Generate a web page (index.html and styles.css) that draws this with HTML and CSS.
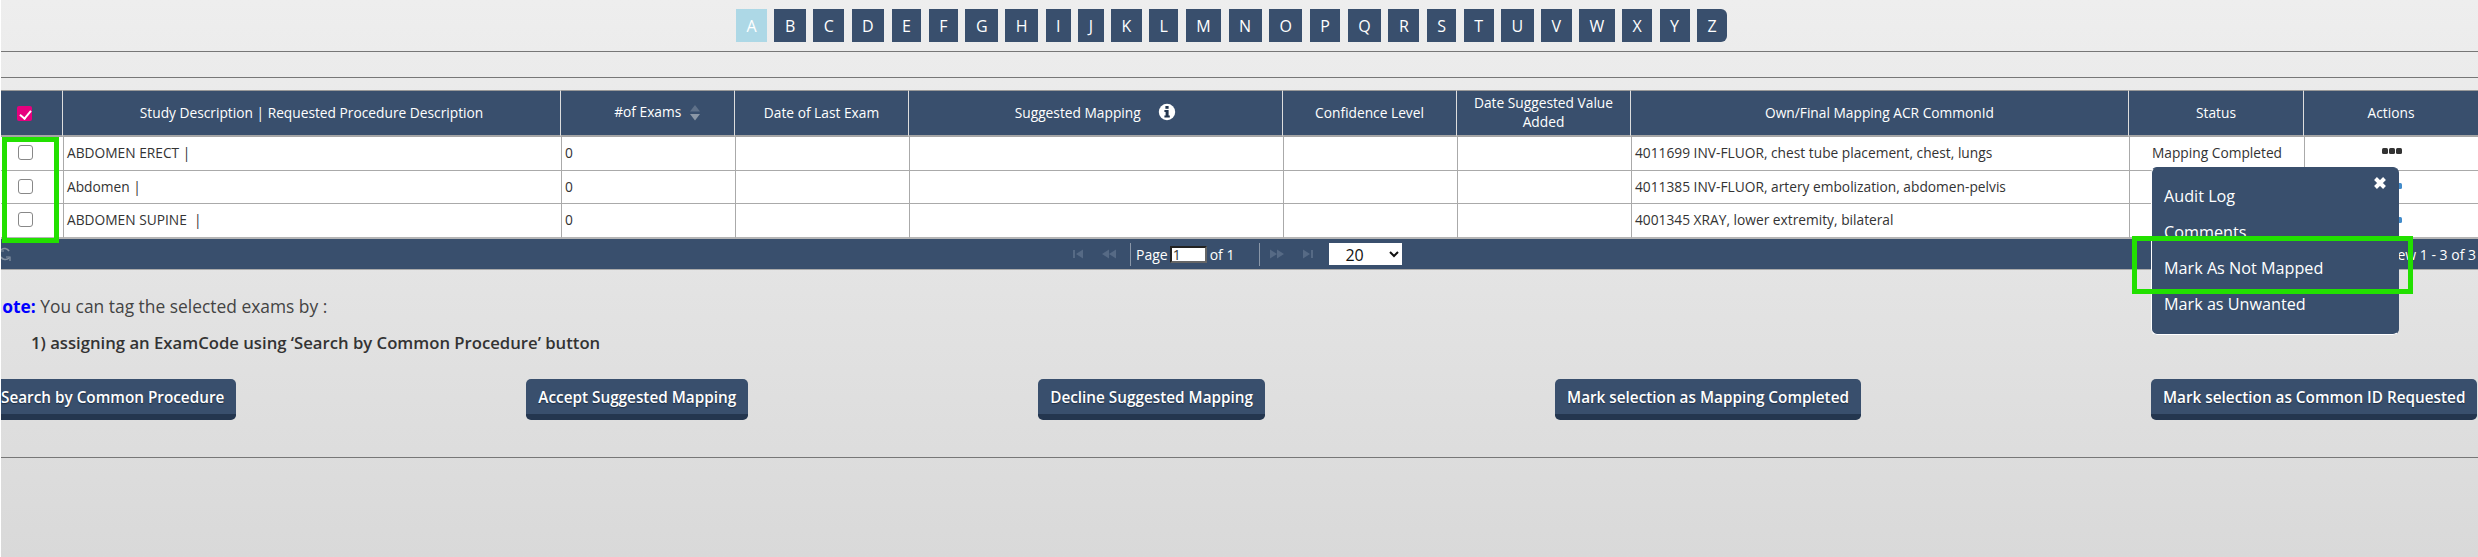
FILE: index.html
```html
<!DOCTYPE html>
<html lang="en">
<head>
<meta charset="utf-8">
<title>Exam Mapping</title>
<link rel="stylesheet" href="styles.css">
</head>
<body>
<div class="page">
  <nav class="alpha">
    <a class="letter active">A</a><a class="letter">B</a><a class="letter">C</a><a class="letter">D</a><a class="letter">E</a><a class="letter">F</a><a class="letter">G</a><a class="letter">H</a><a class="letter">I</a><a class="letter">J</a><a class="letter">K</a><a class="letter">L</a><a class="letter">M</a><a class="letter">N</a><a class="letter">O</a><a class="letter">P</a><a class="letter">Q</a><a class="letter">R</a><a class="letter">S</a><a class="letter">T</a><a class="letter">U</a><a class="letter">V</a><a class="letter">W</a><a class="letter">X</a><a class="letter">Y</a><a class="letter last">Z</a>
  </nav>
  <hr class="rule rule-a">
  <hr class="rule rule-b">

  <table class="grid">
    <colgroup>
      <col class="c-check"><col class="c-wide"><col class="c-std"><col class="c-std"><col class="c-sugg"><col class="c-std"><col class="c-std"><col class="c-wide"><col class="c-status"><col class="c-std">
    </colgroup>
    <thead>
      <tr>
        <th><input type="checkbox" class="check-all" checked></th>
        <th>Study Description | Requested Procedure Description</th>
        <th>#of Exams <svg class="sort" width="10" height="18" viewBox="0 0 10 18"><polygon points="5,1 10,7.5 0,7.5" fill="#5f7189"/><polygon points="0,10 10,10 5,16.5" fill="#8b97a6"/></svg></th>
        <th>Date of Last Exam</th>
        <th>Suggested Mapping <svg class="info" width="18" height="18" viewBox="0 0 18 18"><circle cx="9" cy="9" r="8.2" fill="#fff"/><rect x="7.4" y="3" width="3.2" height="2.8" fill="#24364f"/><path d="M6.4 7h4.2v5.4h1.2v2H6.4v-2h1.2V9H6.4z" fill="#24364f"/></svg></th>
        <th>Confidence Level</th>
        <th>Date Suggested Value Added</th>
        <th>Own/Final Mapping ACR CommonId</th>
        <th>Status</th>
        <th>Actions</th>
      </tr>
    </thead>
    <tbody>
      <tr>
        <td class="center"><input type="checkbox" class="check"></td>
        <td>ABDOMEN ERECT |</td><td>0</td><td></td><td></td><td></td><td></td>
        <td>4011699 INV-FLUOR, chest tube placement, chest, lungs</td>
        <td class="center">Mapping Completed</td>
        <td class="center"><svg class="dots" width="20" height="6" viewBox="0 0 20 6"><rect width="6" height="6" rx="1.5"/><rect x="7" width="6" height="6" rx="1.5"/><rect x="14" width="6" height="6" rx="1.5"/></svg></td>
      </tr>
      <tr>
        <td class="center"><input type="checkbox" class="check"></td>
        <td>Abdomen |</td><td>0</td><td></td><td></td><td></td><td></td>
        <td>4011385 INV-FLUOR, artery embolization, abdomen-pelvis</td>
        <td></td>
        <td class="center"><svg class="dots link" width="20" height="6" viewBox="0 0 20 6"><rect width="6" height="6" rx="1.5"/><rect x="7" width="6" height="6" rx="1.5"/><rect x="14" width="6" height="6" rx="1.5"/></svg></td>
      </tr>
      <tr>
        <td class="center"><input type="checkbox" class="check"></td>
        <td>ABDOMEN SUPINE &nbsp;|</td><td>0</td><td></td><td></td><td></td><td></td>
        <td>4001345 XRAY, lower extremity, bilateral</td>
        <td></td>
        <td class="center"><svg class="dots link" width="20" height="6" viewBox="0 0 20 6"><rect width="6" height="6" rx="1.5"/><rect x="7" width="6" height="6" rx="1.5"/><rect x="14" width="6" height="6" rx="1.5"/></svg></td>
      </tr>
    </tbody>
  </table>

  <div class="pager">
    <svg class="refresh" width="12" height="16" viewBox="0 0 12 16"><path d="M10 5A5 5 0 0 0 2 4M2 11a5 5 0 0 0 8 1" fill="none" stroke="#8793a3" stroke-width="1.6"/><path d="M1 1v4h4M11 15v-4H7" fill="none" stroke="#8793a3" stroke-width="1.2"/></svg>
    <div class="pager-center">
      <svg class="pg-icon" width="12" height="12" viewBox="0 0 12 12"><path d="M1 2h2v8H1zM11 1.500v9L4 6z"/></svg>
      <svg class="pg-icon pg-prev" width="14" height="12" viewBox="0 0 14 12"><path d="M7 1.500v9L0 6zM14 1.500v9L7 6z"/></svg>
      <span class="pg-sep"></span>
      <span class="pg-label">Page</span>
      <input class="pg-input" type="text" value="1">
      <span class="pg-label">of 1</span>
      <span class="pg-sep pg-sep-r"></span>
      <svg class="pg-icon" width="14" height="12" viewBox="0 0 14 12"><path d="M0 1.500v9L7 6zM7 1.500v9L14 6z"/></svg>
      <svg class="pg-icon pg-last" width="12" height="12" viewBox="0 0 12 12"><path d="M1 1.500v9L8 6zM9 2h2v8H9z"/></svg>
      <select class="pg-size"><option>20</option></select>
    </div>
    <span class="pager-count">View 1 - 3 of 3</span>
  </div>

  <p class="note"><b class="note-key">Note:</b> You can tag the selected exams by :</p>
  <p class="note-step">1) assigning an ExamCode using ‘Search by Common Procedure’ button</p>

  <div class="actions">
    <button class="btn">Search by Common Procedure</button>
    <button class="btn">Accept Suggested Mapping</button>
    <button class="btn">Decline Suggested Mapping</button>
    <button class="btn">Mark selection as Mapping Completed</button>
    <button class="btn">Mark selection as Common ID Requested</button>
  </div>
  <hr class="rule rule-c">

  <div class="menu">
    <svg class="menu-close" width="14" height="14" viewBox="0 0 14 14"><path d="M2.500 2.500l9 9M11.500 2.500l-9 9" stroke="#fff" stroke-width="4" fill="none"/></svg>
    <a class="menu-item">Audit Log</a>
    <a class="menu-item">Comments</a>
    <a class="menu-item">Mark As Not Mapped</a>
    <a class="menu-item">Mark as Unwanted</a>
  </div>
  <div class="mark mark-checks"></div>
  <div class="mark mark-item"></div>
</div>
</body>
</html>
```

FILE: styles.css
```css
* { box-sizing: border-box; }
html, body { margin: 0; padding: 0; background: #fff; }
body { padding-left: 1px; font-family: "Open Sans", "Liberation Sans", sans-serif; font-size: 14px; color: #333; }

.page {
  position: relative;
  width: 2477px;
  height: 557px;
  overflow: hidden;
  padding-top: 9px;
  background: linear-gradient(#eeeeee, #d9d9d9);
}

.alpha { display: flex; gap: 7.350px; padding-left: 735px; height: 33px; }
.letter {
  display: flex;
  align-items: center;
  padding: 0 10.500px;
  background: #394f6d;
  color: #fff;
  font-size: 16px;
}
.letter.active { background: #add8e6; }
.letter.last { border-radius: 0 6px 6px 0; }

.rule { margin: 0; border: 0; height: 1px; background: #777; }
.rule-a { margin-top: 9px; }
.rule-b { margin-top: 25px; }
.rule-c { margin-top: 37px; }

.grid {
  table-layout: fixed;
  border-collapse: separate;
  border-spacing: 0;
  width: 2477px;
  margin-top: 12px;
}
.c-check { width: 62px; }
.c-wide { width: 498px; }
.c-std { width: 174px; }
.c-sugg { width: 374px; }
.c-status { width: 175px; }

th {
  height: 47px;
  padding: 0 10px 2px;
  background: #394f6d;
  color: #fff;
  font-weight: 400;
  font-size: 13.750px;
  line-height: 19px;
  text-align: center;
  border-top: 1px solid #999;
  border-right: 1px solid #ddd;
  border-bottom: 2px solid #a5a5a5;
}
th:last-child { border-right: 0; }
td {
  height: 33px;
  padding: 0 3px 2px;
  background: #fff;
  color: #333;
  font-size: 13.750px;
  border-left: 1px solid #aaa;
  border-bottom: 1px solid #aaa;
  white-space: nowrap;
}
td:first-child { border-left: 0; }
tbody tr:first-child td { height: 34px; }
tbody tr:last-child td { height: 35px; border-bottom: 2px solid #b5b5b5; }
td.center { text-align: center; }

.check-all {
  appearance: none;
  display: block;
  width: 15px;
  height: 15px;
  margin: 3px 0 0 6px;
  border-radius: 2px;
  background-color: #e6007e;
  position: relative;
}
.check-all::after {
  content: "";
  position: absolute;
  left: 5px;
  top: 2px;
  width: 5px;
  height: 9px;
  border: solid #fff;
  border-width: 0 2.500px 2.500px 0;
  transform: rotate(40deg);
}
.check {
  appearance: none;
  display: block;
  width: 15px;
  height: 15px;
  margin: 0 0 0 14px;
  background: #fff;
  border: 1.500px solid #888;
  border-radius: 3px;
}
.sort { vertical-align: middle; margin: 0 -19px 0 5px; }
.info { vertical-align: -3px; margin-left: 14px; }
.dots { display: block; margin: -3px auto 0; fill: #333; }
.dots.link { fill: #428bca; margin-top: 0; }

.pager {
  display: flex;
  align-items: center;
  height: 31px;
  background: #394f6d;
  color: #fff;
  border-bottom: 1px solid #aaa;
}
.refresh { margin-left: -2px; flex: none; }
.pager-center { display: flex; align-items: center; margin-left: 1061px; }
.pg-icon { fill: #566a85; flex: none; }
.pg-prev { margin-left: 18px; }
.pg-sep { width: 1px; height: 23px; background: #8a97a8; margin: 0 5px 0 14px; }
.pg-sep-r { margin: 0 10px 0 25px; }
.pg-label { font-size: 14px; }
.pg-input {
  width: 37px;
  height: 17px;
  margin: 0 3px 0 2px;
  padding: 0 0 0 1px;
  border: 2px solid #666;
  border-top-color: #222;
  border-left-color: #222;
  background: #fff;
  color: #333;
  font: 14px "Open Sans", sans-serif;
}
.pg-last { margin-left: 18px; }
.pg-size {
  width: 73px;
  height: 22px;
  margin-left: 15px;
  border: 0;
  border-radius: 0;
  background: #fff;
  color: #111;
  padding-left: 12px;
  font: 16px "Open Sans", sans-serif;
}
.pager-count { margin-left: auto; margin-right: 2px; font-size: 14px; }

.note { margin: 25px 0 0 -13px; font-size: 17.400px; line-height: 22px; color: #444; }
.note-key { color: #00f; font-weight: 700; }
.note-step { margin: 15px 0 0 30px; font-size: 16.700px; line-height: 22px; font-weight: 600; color: #333; }

.actions { display: flex; gap: 290px; margin: 25px 0 0 -12px; }
.btn {
  flex: none;
  height: 41px;
  padding: 0 12px;
  border: 0;
  border-bottom: 6px solid #24364f;
  border-radius: 5px;
  background: #394f6d;
  color: #fff;
  font: 600 15.300px "Open Sans", sans-serif;
  white-space: nowrap;
  text-shadow: 0 1px 1px #1c2b40;
}

.menu {
  position: absolute;
  left: 2150px;
  top: 167px;
  width: 248px;
  height: 168px;
  padding-top: 10px;
  background: #394f6d;
  border: 1px solid #fff;
  border-top-color: #394f6d;
  border-right-color: #394f6d;
  border-radius: 6px;
  display: flex;
  flex-direction: column;
}
.menu-close { position: absolute; right: 11px; top: 8px; }
.menu-item {
  display: block;
  height: 36px;
  padding-left: 12px;
  color: #fff;
  font-size: 16.200px;
  line-height: 36px;
}
.mark { position: absolute; border: 5px solid #22e000; }
.mark-checks { left: 1px; top: 137px; width: 57px; height: 106px; }
.mark-item { left: 2131px; top: 236px; width: 281px; height: 58px; }
```
